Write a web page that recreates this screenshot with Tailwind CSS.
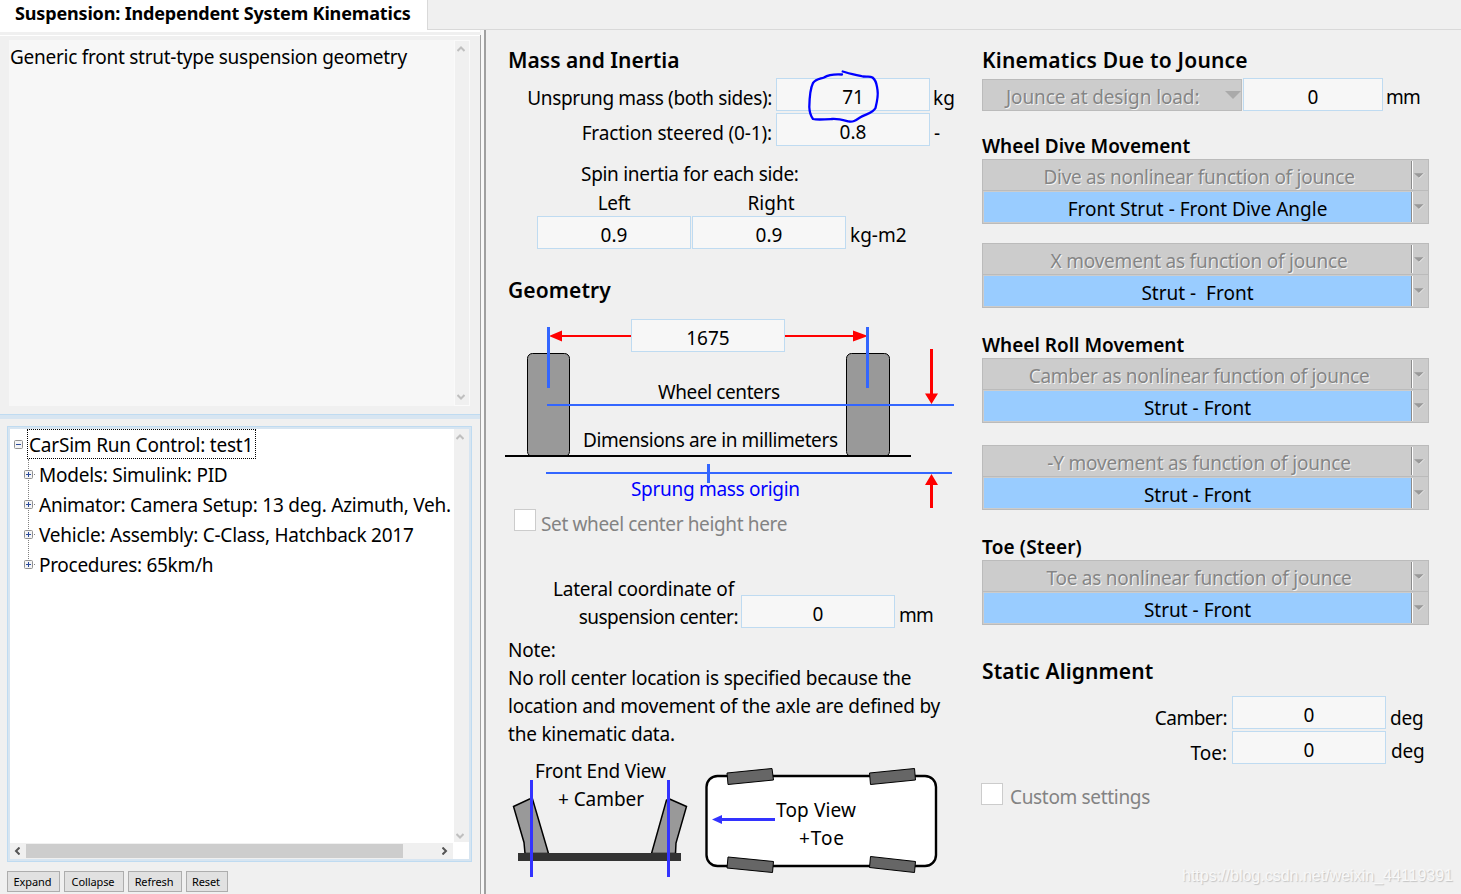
<!DOCTYPE html>
<html lang="en">
    <head>
        <meta charset="UTF-8" />
        <meta name="viewport" content="width=device-width, initial-scale=1.0" />
        <script src="https://cdn.jsdelivr.net/npm/@tailwindcss/browser@4"></script>
        <title>Suspension: Independent System Kinematics</title>
    </head>
    <body class="w-[1461px] h-[894px] overflow-hidden bg-[#f0f0f0] text-black text-[19px] leading-7 font-['Noto_Sans','Open_Sans',sans-serif] whitespace-nowrap relative flex flex-col">
        <!-- tab strip -->
        <header class="flex h-[30px] shrink-0">
            <div class="w-[427px] bg-white pl-[15px] font-bold text-[18px] leading-[27px] tracking-[-0.16px]">Suspension: Independent System Kinematics</div>
            <div class="flex-1 border-l border-b border-[#d9d9d9]"></div>
        </header>

        <div class="flex flex-1 min-h-0">
            <!-- left pane -->
            <aside class="w-[480px] flex flex-col border-t-2 border-white">
                <div class="h-[3px] shrink-0"></div>
                <div class="h-px bg-white shrink-0"></div>
                <div class="flex mt-1 ml-[9px] w-[461px] h-[366px] bg-[#f7f7f7] shrink-0">
                    <div class="flex-1 pl-px pt-[3px] tracking-[-0.26px]">Generic front strut-type suspension geometry</div>
                    <div class="w-4 border border-[#fafafa] bg-[#f0f0f0] flex flex-col justify-between items-center py-[5px] pr-[3px]">
                        <svg width="8" height="6" viewBox="0 0 8 6" fill="none" stroke="#bfbfbf" stroke-width="2"><path d="M0.5 5 4 1.5 7.5 5" /></svg>
                        <svg width="8" height="6" viewBox="0 0 8 6" fill="none" stroke="#bfbfbf" stroke-width="2"><path d="M0.5 1 4 4.5 7.5 1" /></svg>
                    </div>
                </div>
                <div class="mt-2 h-[5px] shrink-0 bg-[#d7e5f1] border-t border-[#bfdbf1]"></div>

                <!-- run control tree -->
                <div class="mt-[7px] ml-[7px] w-[465px] h-[436px] shrink-0 border border-[#bfdbf1] bg-[#d7e5f1] p-0.5">
                    <div class="flex flex-col h-full bg-white">
                        <div class="flex flex-1 min-h-0">
                            <div class="flex-1 relative">
                                <div class="absolute left-[18px] top-[30px] h-[106px] border-l border-dotted border-[#808080]"></div>
                                <div class="flex items-center h-[30px] pl-1">
                                    <svg class="shrink-0" width="9" height="9" viewBox="0 0 9 9"><rect x=".5" y=".5" width="8" height="8" rx="1" fill="#f4f4f4" stroke="#919191" /><path d="M2 4.5h5" stroke="#2b4a9b" /></svg>
                                    <span class="ml-1 pl-px w-[229px] h-[30px] leading-[30px] border border-dotted border-black tracking-[-0.2px]">CarSim Run Control: test1</span>
                                </div>
                                <div class="flex items-center h-[30px] pl-3.5 relative">
                                    <svg class="shrink-0" width="12" height="9" viewBox="0 0 12 9"><rect x=".5" y=".5" width="8" height="8" rx="1" fill="#f4f4f4" stroke="#919191" /><path d="M2 4.5h5M4.5 2v5" stroke="#2b4a9b" /><path d="M10 4.5h1" stroke="#808080" /></svg>
                                    <span class="ml-[3px] pt-0.5 tracking-[-0.24px]">Models: Simulink: PID</span>
                                </div>
                                <div class="flex items-center h-[30px] pl-3.5 relative">
                                    <svg class="shrink-0" width="12" height="9" viewBox="0 0 12 9"><rect x=".5" y=".5" width="8" height="8" rx="1" fill="#f4f4f4" stroke="#919191" /><path d="M2 4.5h5M4.5 2v5" stroke="#2b4a9b" /><path d="M10 4.5h1" stroke="#808080" /></svg>
                                    <span class="ml-[3px] pt-0.5 tracking-[-0.24px]">Animator: Camera Setup: 13 deg. Azimuth, Veh.</span>
                                </div>
                                <div class="flex items-center h-[30px] pl-3.5 relative">
                                    <svg class="shrink-0" width="12" height="9" viewBox="0 0 12 9"><rect x=".5" y=".5" width="8" height="8" rx="1" fill="#f4f4f4" stroke="#919191" /><path d="M2 4.5h5M4.5 2v5" stroke="#2b4a9b" /><path d="M10 4.5h1" stroke="#808080" /></svg>
                                    <span class="ml-[3px] pt-0.5 tracking-[-0.24px]">Vehicle: Assembly: C-Class, Hatchback 2017</span>
                                </div>
                                <div class="flex items-center h-[30px] pl-3.5 relative">
                                    <svg class="shrink-0" width="12" height="9" viewBox="0 0 12 9"><rect x=".5" y=".5" width="8" height="8" rx="1" fill="#f4f4f4" stroke="#919191" /><path d="M2 4.5h5M4.5 2v5" stroke="#2b4a9b" /><path d="M10 4.5h1" stroke="#808080" /></svg>
                                    <span class="ml-[3px] pt-0.5 tracking-[-0.3px]">Procedures: 65km/h</span>
                                </div>
                            </div>
                            <div class="w-[15px] bg-[#f0f0f0] flex flex-col justify-between items-center pt-[5px] pb-[3px] pr-[3px]">
                                <svg width="8" height="6" viewBox="0 0 8 6" fill="none" stroke="#bfbfbf" stroke-width="2"><path d="M0.5 5 4 1.5 7.5 5" /></svg>
                                <svg width="8" height="6" viewBox="0 0 8 6" fill="none" stroke="#bfbfbf" stroke-width="2"><path d="M0.5 1 4 4.5 7.5 1" /></svg>
                            </div>
                        </div>
                        <div class="flex w-[443px] h-4 bg-[#f0f0f0] items-center mt-px">
                            <svg class="ml-1" width="6" height="8" viewBox="0 0 6 8" fill="none" stroke="#555" stroke-width="2"><path d="M5.5 0.5 2 4 5.5 7.5" /></svg>
                            <div class="ml-1.5 w-[377px] h-3.5 bg-[#cdcdcd]"></div>
                            <svg class="ml-auto mr-[5px]" width="6" height="8" viewBox="0 0 6 8" fill="none" stroke="#555" stroke-width="2"><path d="M0.5 0.5 4 4 0.5 7.5" /></svg>
                        </div>
                    </div>
                </div>

                <div class="flex gap-1 mt-[9px] ml-[7px] text-[11px] leading-[19px] tracking-[-0.1px]">
                    <button class="w-[53px] h-[21px] bg-[#e1e1e1] border border-[#adadad] pr-0.5">Expand</button>
                    <button class="w-[60px] h-[21px] bg-[#e1e1e1] border border-[#adadad] pr-0.5">Collapse</button>
                    <button class="w-[54px] h-[21px] bg-[#e1e1e1] border border-[#adadad] pr-0.5">Refresh</button>
                    <button class="w-[42px] h-[21px] bg-[#e1e1e1] border border-[#adadad] pr-0.5">Reset</button>
                </div>
            </aside>

            <div class="w-px bg-[#a0a0a0] mt-[5px]"></div>
            <div class="w-[3px] bg-[#f8f8f8]"></div>
            <div class="w-0.5 bg-[#a0a0a0]"></div>

            <!-- mass, inertia and geometry -->
            <main class="w-[496px] pl-[22px] pt-4 shrink-0">
                <h2 class="h-7 text-[21px] font-semibold">Mass and Inertia</h2>
                <div class="mt-1 flex h-[33px] relative">
                    <div class="w-[264px] text-right pt-1.5 tracking-[-0.37px]">Unsprung mass (both sides):</div>
                    <div class="ml-1 w-[154px] h-[33px] border border-[#bfdbf1] bg-[#f7f7f7] text-center pt-1">71</div>
                    <div class="ml-[3px] pt-1.5">kg</div>
                    <svg class="absolute left-[292px] -top-2 z-10" width="90" height="56" viewBox="800 70 90 56" fill="none" stroke="#0000ff" stroke-width="2.3" stroke-linecap="round" stroke-linejoin="round">
                        <path d="M842.7 71.5C850 74 857 75 863 76.5 868 77 870 76 872.500 77.500 877 81 876.500 85 877.500 90 878.500 96 877 102 875.500 108 873 113 866 114 860 117.500 855 121 853 122 849 121.500 843 120 838 118.500 832 119 824 119.500 817 120 813 119 810 115 809.500 112 809.300 107 809.500 97 810 89 813 83 816 79 820 79 824 77.500 828 75 834 74 842 74.500 850 76.500" />
                    </svg>
                </div>
                <div class="mt-0.5 flex h-[33px]">
                    <div class="w-[264px] text-right pt-1.5 tracking-[-0.14px]">Fraction steered (0-1):</div>
                    <div class="ml-1 w-[154px] h-[33px] border border-[#bfdbf1] bg-[#f7f7f7] text-center pt-1">0.8</div>
                    <div class="ml-1 pt-1.5">-</div>
                </div>
                <div class="mt-3.5 h-7 ml-[73px] tracking-[-0.3px]">Spin inertia for each side:</div>
                <div class="mt-px ml-[29px] flex h-[27px] gap-px text-center">
                    <div class="w-[154px] tracking-[-0.4px]">Left</div>
                    <div class="w-[158px]">Right</div>
                </div>
                <div class="ml-[29px] flex h-[33px] gap-px">
                    <div class="w-[154px] h-[33px] border border-[#bfdbf1] bg-[#f7f7f7] text-center pt-1">0.9</div>
                    <div class="w-[154px] h-[33px] border border-[#bfdbf1] bg-[#f7f7f7] text-center pt-1">0.9</div>
                    <div class="ml-[3px] pt-[5px]">kg-m2</div>
                </div>
                <h2 class="mt-[27px] h-7 text-[21px] font-semibold tracking-[0.1px]">Geometry</h2>

                <div class="relative h-[205px] -ml-[22px]">
                    <svg width="496" height="205" viewBox="486 304 496 205">
                        <g fill="#999" stroke="#000">
                            <rect x="527.5" y="353.5" width="42" height="103" rx="5" />
                            <rect x="846.5" y="353.5" width="43" height="103" rx="5" />
                        </g>
                        <path d="M505 456h406" stroke="#000" stroke-width="2" />
                        <path d="M556 336h76M784 336h76" stroke="#f00" stroke-width="2" />
                        <path d="M549 336 562 330.500v11zM868 336 853 330.500v11z" fill="#f00" />
                        <path d="M548.5 327v61M867.500 327v61M708.500 464v19" stroke="#36f" stroke-width="3" />
                        <path d="M547 405h407M546 473h406" stroke="#36f" stroke-width="2" />
                        <path d="M931.5 349v46M931.5 483v25" stroke="#f00" stroke-width="3" />
                        <path d="M925 393.500h13l-6.500 10.500zM925 485h13l-6.500-11z" fill="#f00" />
                        <text x="658" y="399" textLength="122">Wheel centers</text>
                        <text x="583" y="447" textLength="255">Dimensions are in millimeters</text>
                        <text x="631" y="496" textLength="169" fill="#00f">Sprung mass origin</text>
                    </svg>
                    <div class="absolute left-[145px] top-[15px] w-[154px] h-[33px] border border-[#bfdbf1] bg-[#f7f7f7] text-center pt-1">1675</div>
                </div>

                <label class="flex h-[22px] ml-1.5 text-[#838383]">
                    <span class="w-[22px] h-[22px] bg-white border border-[#ccc]"></span>
                    <span class="ml-[5px] pt-px tracking-[-0.36px]">Set wheel center height here</span>
                </label>

                <div class="mt-11 flex h-14">
                    <div class="w-[230px] text-right"><span class="pr-1 tracking-[-0.2px]">Lateral coordinate of</span><br /><span class="tracking-[-0.5px]">suspension center:</span></div>
                    <div class="ml-[3px] mt-5 w-[154px] h-[33px] border border-[#bfdbf1] bg-[#f7f7f7] text-center pt-1">0</div>
                    <div class="ml-1 mt-[26px] tracking-[-0.8px]">mm</div>
                </div>
                <p class="mt-[5px] h-28 tracking-[-0.22px]">Note:<br />No roll center location is specified because the<br />location and movement of the axle are defined by<br />the kinematic data.</p>

                <svg class="-ml-[22px]" width="496" height="140" viewBox="486 748 496 140">
                    <!-- front end view -->
                    <g fill="#999" stroke="#000" stroke-width="1.500">
                        <path d="M513.500 806.500 529.500 799h3l16 54.500h-23.500l-1-11z" />
                        <path d="M669.500 799 686.500 806.500 676 843l-.5 10.500h-24L666.500 800z" />
                    </g>
                    <path d="M518 857h163" stroke="#333" stroke-width="8" />
                    <path d="M531.500 780v97M668.500 780v97" stroke="#33f" stroke-width="3" />
                    <text x="535" y="778" textLength="131">Front End View</text>
                    <text x="558" y="806" textLength="86">+ Camber</text>
                    <!-- top view -->
                    <rect x="706.5" y="776" width="229.500" height="90" rx="11" fill="#fff" stroke="#000" stroke-width="2.400" />
                    <g fill="#666" stroke="#000">
                        <path d="M727 773 772 768.500 773.500 780 728 784.500z" />
                        <path d="M869.500 773 914.500 768.500 915.500 780 870.500 784.500z" />
                        <path d="M728 857 773.500 861.500 772.500 872.500 727 868z" />
                        <path d="M870.500 856.500 915.500 861.500 914.500 872.500 869.500 867.500z" />
                    </g>
                    <path d="M720 819.500h55" stroke="#33f" stroke-width="3" />
                    <path d="M712 819.500 722 815v9z" fill="#33f" />
                    <text x="776" y="817" textLength="80">Top View</text>
                    <text x="799" y="845" textLength="45">+Toe</text>
                </svg>
            </main>

            <!-- kinematics -->
            <section class="w-[447px] pt-4 shrink-0">
                <h2 class="h-7 text-[21px] font-semibold tracking-[0.2px]">Kinematics Due to Jounce</h2>
                <div class="mt-1 flex h-[33px]">
                    <div class="mt-px w-[260px] h-8 border border-[#bbb] bg-[#ccc] text-[#858585] flex items-center [text-shadow:1px_1px_0_#f4f4f4]">
                        <span class="ml-[23px] pt-1 tracking-[-0.12px]">Jounce at design load:</span>
                        <svg class="ml-auto" width="16" height="8" viewBox="0 0 16 8"><path d="M0 0h16L8 8z" fill="#aaa" /></svg>
                    </div>
                    <div class="ml-px w-[140px] h-[33px] border border-[#bfdbf1] bg-[#f7f7f7] text-center pt-1">0</div>
                    <div class="ml-[3px] pt-[5px] tracking-[-0.8px]">mm</div>
                </div>

                <h3 class="mt-[21px] h-[27px] font-semibold">Wheel Dive Movement</h3>
                <div class="w-[447px] h-[65px] border border-[#bbb] bg-[#ccc]">
                    <div class="flex h-[31px] border-b border-[#bbb]">
                        <div class="w-[429px] my-px border-r border-[#8c8c8c] text-center text-[#858585] pl-1 pt-0.5 tracking-[-0.28px] [text-shadow:1px_1px_0_#f4f4f4]">Dive as nonlinear function of jounce</div>
                        <svg class="border-l border-white my-px" width="16" height="28" viewBox="0 0 16 28"><path d="M1 12h11L6.500 17z" fill="#999" /><path d="M12 12 6.500 17.500" stroke="#eee" /></svg>
                    </div>
                    <div class="flex h-8 p-px pr-0">
                        <div class="w-[428px] bg-[#9cf] border-r border-[#8c8c8c] text-center pt-[3px]">Front Strut - Front Dive Angle</div>
                        <svg class="border-l border-white" width="16" height="30" viewBox="0 0 16 30"><path d="M1 12h11L6.500 17z" fill="#999" /><path d="M12 12 6.500 17.500" stroke="#eee" /></svg>
                    </div>
                </div>
                <div class="mt-[19px] w-[447px] h-[65px] border border-[#bbb] bg-[#ccc]">
                    <div class="flex h-[31px] border-b border-[#bbb]">
                        <div class="w-[429px] my-px border-r border-[#8c8c8c] text-center text-[#858585] pl-1 pt-0.5 tracking-[-0.22px] [text-shadow:1px_1px_0_#f4f4f4]">X movement as function of jounce</div>
                        <svg class="border-l border-white my-px" width="16" height="28" viewBox="0 0 16 28"><path d="M1 12h11L6.500 17z" fill="#999" /><path d="M12 12 6.500 17.500" stroke="#eee" /></svg>
                    </div>
                    <div class="flex h-8 p-px pr-0">
                        <div class="w-[428px] bg-[#9cf] border-r border-[#8c8c8c] text-center pt-[3px]">Strut -&nbsp; Front</div>
                        <svg class="border-l border-white" width="16" height="30" viewBox="0 0 16 30"><path d="M1 12h11L6.500 17z" fill="#999" /><path d="M12 12 6.500 17.500" stroke="#eee" /></svg>
                    </div>
                </div>

                <h3 class="mt-[23px] h-[27px] font-semibold">Wheel Roll Movement</h3>
                <div class="w-[447px] h-[65px] border border-[#bbb] bg-[#ccc]">
                    <div class="flex h-[31px] border-b border-[#bbb]">
                        <div class="w-[429px] my-px border-r border-[#8c8c8c] text-center text-[#858585] pl-1 pt-0.5 tracking-[-0.32px] [text-shadow:1px_1px_0_#f4f4f4]">Camber as nonlinear function of jounce</div>
                        <svg class="border-l border-white my-px" width="16" height="28" viewBox="0 0 16 28"><path d="M1 12h11L6.500 17z" fill="#999" /><path d="M12 12 6.500 17.500" stroke="#eee" /></svg>
                    </div>
                    <div class="flex h-8 p-px pr-0">
                        <div class="w-[428px] bg-[#9cf] border-r border-[#8c8c8c] text-center pt-[3px]">Strut - Front</div>
                        <svg class="border-l border-white" width="16" height="30" viewBox="0 0 16 30"><path d="M1 12h11L6.500 17z" fill="#999" /><path d="M12 12 6.500 17.500" stroke="#eee" /></svg>
                    </div>
                </div>
                <div class="mt-[22px] w-[447px] h-[65px] border border-[#bbb] bg-[#ccc]">
                    <div class="flex h-[31px] border-b border-[#bbb]">
                        <div class="w-[429px] my-px border-r border-[#8c8c8c] text-center text-[#858585] pl-1 pt-0.5 tracking-[-0.18px] [text-shadow:1px_1px_0_#f4f4f4]">-Y movement as function of jounce</div>
                        <svg class="border-l border-white my-px" width="16" height="28" viewBox="0 0 16 28"><path d="M1 12h11L6.500 17z" fill="#999" /><path d="M12 12 6.500 17.500" stroke="#eee" /></svg>
                    </div>
                    <div class="flex h-8 p-px pr-0">
                        <div class="w-[428px] bg-[#9cf] border-r border-[#8c8c8c] text-center pt-[3px]">Strut - Front</div>
                        <svg class="border-l border-white" width="16" height="30" viewBox="0 0 16 30"><path d="M1 12h11L6.500 17z" fill="#999" /><path d="M12 12 6.500 17.500" stroke="#eee" /></svg>
                    </div>
                </div>

                <h3 class="mt-[23px] h-[27px] font-semibold tracking-[0.15px]">Toe (Steer)</h3>
                <div class="w-[447px] h-[65px] border border-[#bbb] bg-[#ccc]">
                    <div class="flex h-[31px] border-b border-[#bbb]">
                        <div class="w-[429px] my-px border-r border-[#8c8c8c] text-center text-[#858585] pl-1 pt-0.5 tracking-[-0.24px] [text-shadow:1px_1px_0_#f4f4f4]">Toe as nonlinear function of jounce</div>
                        <svg class="border-l border-white my-px" width="16" height="28" viewBox="0 0 16 28"><path d="M1 12h11L6.500 17z" fill="#999" /><path d="M12 12 6.500 17.500" stroke="#eee" /></svg>
                    </div>
                    <div class="flex h-8 p-px pr-0">
                        <div class="w-[428px] bg-[#9cf] border-r border-[#8c8c8c] text-center pt-[3px]">Strut - Front</div>
                        <svg class="border-l border-white" width="16" height="30" viewBox="0 0 16 30"><path d="M1 12h11L6.500 17z" fill="#999" /><path d="M12 12 6.500 17.500" stroke="#eee" /></svg>
                    </div>
                </div>

                <h2 class="mt-8 h-7 text-[21px] font-semibold tracking-[0.1px]">Static Alignment</h2>
                <div class="mt-[11px] flex h-[33px]">
                    <div class="w-[245px] text-right pt-2 tracking-[-0.5px]">Camber:</div>
                    <div class="ml-[5px] w-[154px] h-[33px] border border-[#bfdbf1] bg-[#f7f7f7] text-center pt-1">0</div>
                    <div class="ml-1 pt-2 tracking-[-0.2px]">deg</div>
                </div>
                <div class="mt-0.5 flex h-[33px]">
                    <div class="w-[245px] text-right pt-2">Toe:</div>
                    <div class="ml-[5px] w-[154px] h-[33px] border border-[#bfdbf1] bg-[#f7f7f7] text-center pt-1">0</div>
                    <div class="ml-[5px] pt-1.5 tracking-[-0.2px]">deg</div>
                </div>
                <label class="mt-[19px] flex h-[22px] -ml-px text-[#838383]">
                    <span class="w-[22px] h-[22px] bg-white border border-[#ccc]"></span>
                    <span class="ml-[7px] tracking-[-0.33px]">Custom settings</span>
                </label>
            </section>
        </div>

        <div class="absolute right-2 bottom-[5px] text-[16px] leading-[26px] text-[#f8f8f8] font-['Liberation_Sans',sans-serif] [text-shadow:1px_1px_1px_#c4c4c4]">https://blog.csdn.net/weixin_44119391</div>
    </body>
</html>
